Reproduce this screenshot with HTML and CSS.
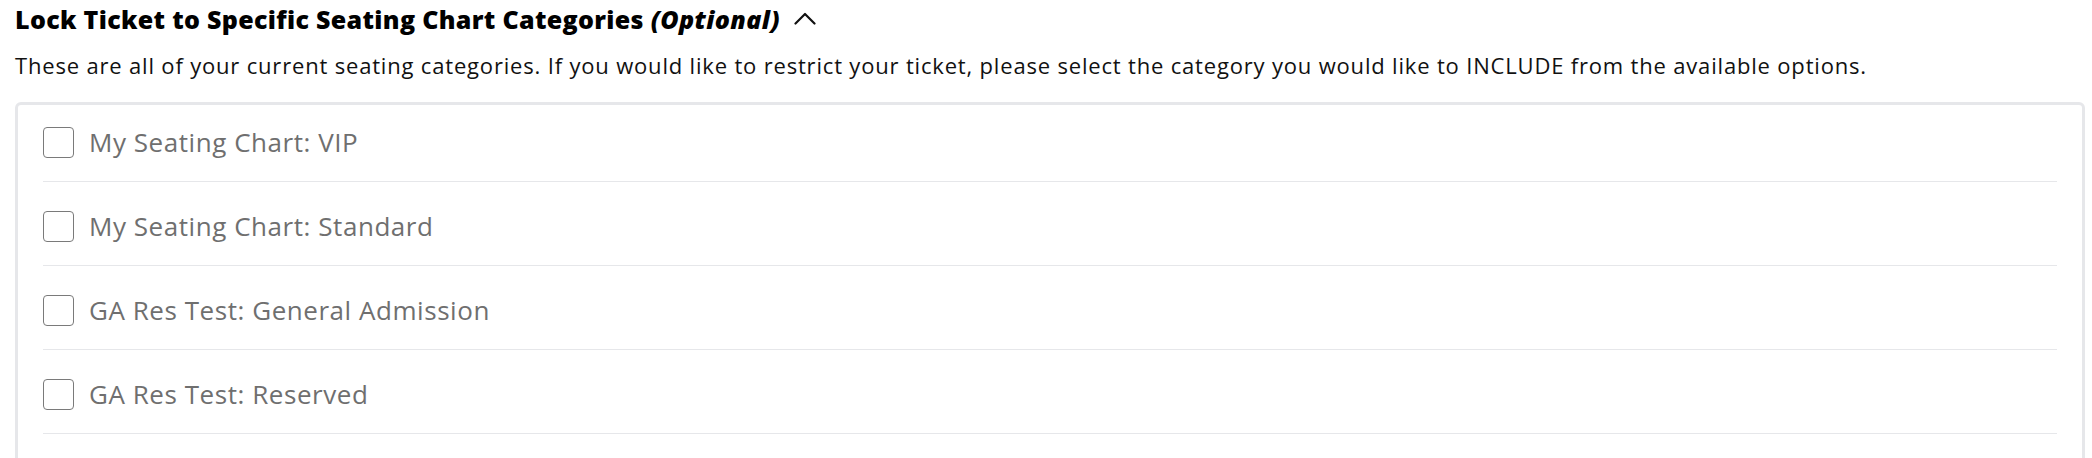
FILE: index.html
```html
<!DOCTYPE html>
<html>
<head>
<meta charset="utf-8">
<link rel="stylesheet" href="styles.css">
</head>
<body>
<div class="page">
  <div class="heading">
    <span class="heading-text">Lock Ticket to Specific Seating Chart Categories <em>(Optional)</em></span>
    <svg class="chevron" width="22" height="13" viewBox="0 0 22 13"><polyline points="1.5,11.5 11,2 20.5,11.5" fill="none" stroke="#111" stroke-width="2.2" stroke-linecap="round" stroke-linejoin="round"/></svg>
  </div>
  <p class="desc">These are all of your current seating categories. If you would like to restrict your ticket, please select the category you would like to INCLUDE from the available options.</p>
  <div class="box">
    <label class="row"><span class="check"></span><span class="label">My Seating Chart: VIP</span></label>
    <label class="row"><span class="check"></span><span class="label">My Seating Chart: Standard</span></label>
    <label class="row"><span class="check"></span><span class="label">GA Res Test: General Admission</span></label>
    <label class="row"><span class="check"></span><span class="label">GA Res Test: Reserved</span></label>
  </div>
</div>
</body>
</html>
```
FILE: styles.css
```css
* { box-sizing: border-box; }
html, body { margin: 0; padding: 0; background: #fff; }
body { font-family: "Open Sans", "Liberation Sans", sans-serif; color: #111; }
.page { padding: 0 7px 0 15px; }
.heading { display: flex; align-items: center; gap: 14px; height: 38px; }
.heading-text { font-size: 25px; font-weight: 800; color: #000; letter-spacing: 0.33px; }
.heading-text em { font-style: italic; }
.chevron { display: block; margin-top: -1px; }
.desc { margin: 0; font-size: 22px; letter-spacing: 0.82px; line-height: 32px; color: #111; padding-top: 11px; height: 64px; }
.box { border: 3px solid #e6e7ea; border-radius: 6px; padding: 0 25px 60px; background: #fff; }
.row { display: flex; align-items: center; gap: 15px; padding: 29px 0 23px; border-bottom: 1px solid #e6e7ea; }
.row:first-child { padding-top: 22px; }
.check { width: 31px; height: 31px; border: 1.5px solid #7a7a7a; border-radius: 4px; flex: none; }
.label { font-size: 26px; letter-spacing: 0.55px; color: #6f6f6f; line-height: 31px; }
```
